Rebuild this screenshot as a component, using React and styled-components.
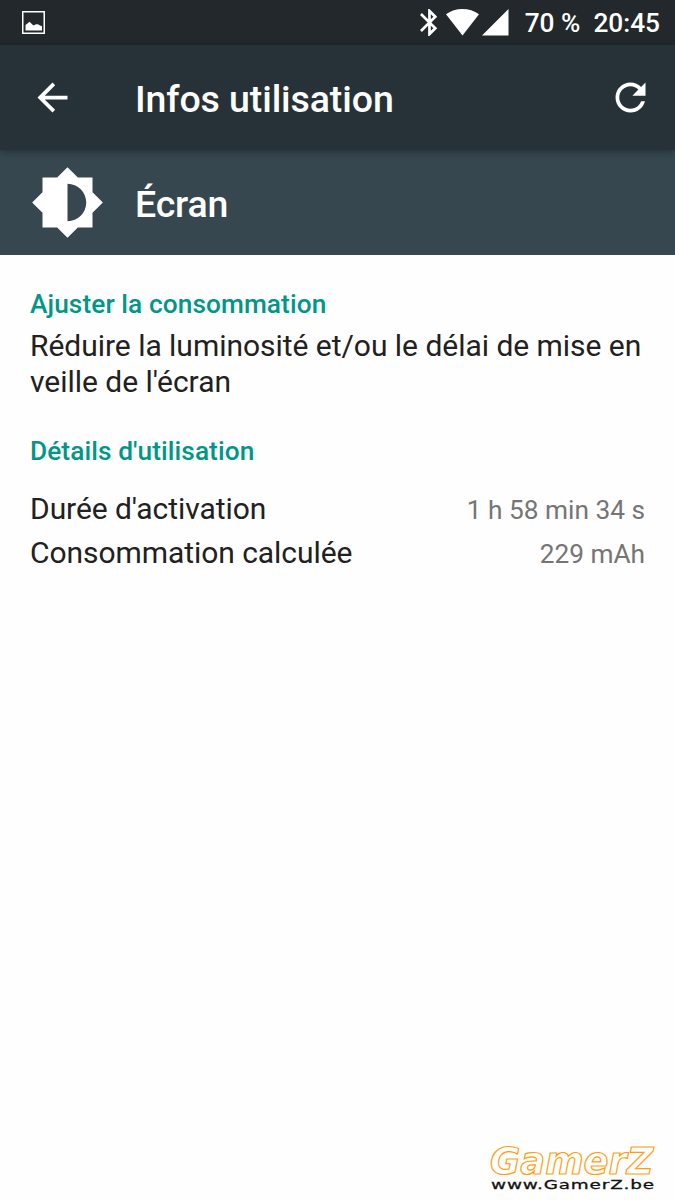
import React from "react";
import styled, { createGlobalStyle } from "styled-components";

const GlobalStyle = createGlobalStyle`
  *, *::before, *::after { box-sizing: border-box; }
  body { margin: 0; background: #fefefe; font-family: Roboto, sans-serif; }
`;

const Screen = styled.div`
  display: flex;
  flex-direction: column;
  width: 675px;
  height: 1200px;
  overflow: hidden;
  background: #fefefe;
`;

const StatusBar = styled.div`
  display: flex;
  align-items: center;
  height: 45px;
  padding: 0 15px 0 22px;
  background: #22282b;
  color: #fff;
  flex: none;
`;

const StatusIcons = styled.div`
  display: flex;
  align-items: center;
  margin-left: auto;
  padding-right: 15.8px;
`;

const Glyph = styled.svg`
  display: block;
  flex: none;
  width: ${(p) => p.$w}px;
  height: ${(p) => p.$h}px;
  margin-left: ${(p) => p.$gap || 0}px;
  fill: #fff;
`;

const StatusText = styled.span`
  font-size: 26.25px;
  line-height: 31px;
  font-weight: 500;
  white-space: pre;
  padding-top: 2px;
  margin-left: ${(p) => p.$gap || 0}px;
`;

const AppBar = styled.header`
  display: flex;
  align-items: center;
  height: 105px;
  padding: 0 22.5px 0 30px;
  background: #273238;
  color: #fff;
  box-shadow: 0 2px 7px rgba(0, 0, 0, 0.35);
  z-index: 1;
  flex: none;
`;

const Title = styled.h1`
  margin: 0 auto 0 60px;
  font-size: 37.5px;
  line-height: 44px;
  font-weight: 500;
  letter-spacing: -0.1px;
  padding-top: 3px;
`;

const Hero = styled.section`
  display: flex;
  align-items: center;
  height: 105px;
  padding-left: 30px;
  background: #37474f;
  color: #fff;
  flex: none;
`;

const HeroName = styled.h2`
  margin: 0 0 0 30px;
  padding-top: 3px;
  font-size: 37.5px;
  line-height: 44px;
  font-weight: 500;
  letter-spacing: -0.15px;
`;

const Content = styled.main`
  padding: 34px 30px 0;
`;

const SectionTitle = styled.h3`
  margin: 0;
  font-size: 26.25px;
  line-height: 31px;
  font-weight: 500;
  letter-spacing: 0.08px;
  color: #009688;
`;

const Tip = styled.p`
  margin: 8px 0 37px;
  font-size: 30px;
  line-height: 35.5px;
  letter-spacing: -0.03px;
  color: #212121;
`;

const Details = styled.dl`
  display: grid;
  gap: 9px;
  margin: 24px 0 0;
`;

const Detail = styled.div`
  display: flex;
  justify-content: space-between;
  align-items: baseline;
  height: 35px;
`;

const Label = styled.dt`
  font-size: 30px;
  line-height: 35px;
  letter-spacing: -0.06px;
  color: #212121;
`;

const Value = styled.dd`
  margin: 0;
  font-size: 26.25px;
  line-height: 31px;
  color: #757575;
`;

const Watermark = styled.svg`
  display: block;
  width: 185px;
  height: 60px;
  margin: auto 5px 0 auto;
  flex: none;
`;

const Brand = styled.text`
  font: italic bold 37px "DejaVu Sans", sans-serif;
  fill: #fff;
  stroke: #ff9f10;
  stroke-width: 1.2px;
`;

const Site = styled.text`
  font: 13px "DejaVu Sans", sans-serif;
  letter-spacing: 0.6px;
  fill: #111;
  stroke: #111;
  stroke-width: 0.3px;
`;

export default function App() {
  return (
    <Screen>
      <GlobalStyle />
      <StatusBar>
        <Glyph $w={23} $h={23} viewBox="0 0 23 23">
          <path fillRule="evenodd" d="M0 0H23V23H0ZM1.5 1.5V21.5H21.5V1.5Z" />
          <path d="M3.5 19.5V14C4.8 13.3 6 12 7.4 10.8C9 12 10.3 13.8 11.7 14.4C13.4 13.5 15.5 12.6 17 13.8C18.2 14.9 19.6 14.8 20 15.5V19.5Z" />
        </Glyph>
        <StatusIcons>
          <Glyph $w={17.2} $h={27} viewBox="5 2 12.71 20">
            <path d="M17.71 7.71 12 2h-1v7.59L6.41 5 5 6.41 10.59 12 5 17.59 6.41 19 11 14.41V22h1l5.71-5.71-4.3-4.29 4.3-4.29zM13 5.83l1.88 1.88L13 9.59V5.83zm1.88 10.46L13 18.17v-3.76l1.88 1.88z" />
          </Glyph>
          <Glyph $w={33} $h={26.5} $gap={9} viewBox="0 0 33 26.5">
            <path d="M16.5 26.5 0 5.3C4.8 1.7 10.5 0 16.5 0S28.2 1.7 33 5.3Z" />
          </Glyph>
          <Glyph $w={26.5} $h={26.5} $gap={3.5} viewBox="0 0 26 26">
            <path d="M0 26H26V0Z" />
          </Glyph>
        </StatusIcons>
        <StatusText>70 %</StatusText>
        <StatusText $gap={13}>20:45</StatusText>
      </StatusBar>
      <AppBar>
        <Glyph $w={45} $h={45} viewBox="0 0 24 24">
          <path d="M20 11H7.83l5.59-5.59L12 4l-8 8 8 8 1.41-1.41L7.83 13H20v-2z" />
        </Glyph>
        <Title>Infos utilisation</Title>
        <Glyph $w={45} $h={45} viewBox="0 0 24 24">
          <path d="M17.65 6.35C16.2 4.9 14.21 4 12 4c-4.42 0-7.99 3.58-7.99 8s3.57 8 7.99 8c3.73 0 6.84-2.55 7.73-6h-2.08c-.82 2.33-3.04 4-5.65 4-3.31 0-6-2.69-6-6s2.69-6 6-6c1.66 0 3.14.69 4.22 1.78L13 11h7V4l-2.35 2.35z" />
        </Glyph>
      </AppBar>
      <Hero>
        <Glyph $w={75} $h={75} viewBox="0 0 24 24">
          <path d="M20 15.31 23.31 12 20 8.69V4h-4.69L12 .69 8.69 4H4v4.69L.69 12 4 15.31V20h4.69L12 23.31 15.31 20H20v-4.69zM12 18V6c3.31 0 6 2.69 6 6s-2.69 6-6 6z" />
        </Glyph>
        <HeroName>Écran</HeroName>
      </Hero>
      <Content>
        <SectionTitle>Ajuster la consommation</SectionTitle>
        <Tip>Réduire la luminosité et/ou le délai de mise en veille de l'écran</Tip>
        <SectionTitle>Détails d'utilisation</SectionTitle>
        <Details>
          <Detail>
            <Label>Durée d'activation</Label>
            <Value>1 h 58 min 34 s</Value>
          </Detail>
          <Detail>
            <Label>Consommation calculée</Label>
            <Value>229 mAh</Value>
          </Detail>
        </Details>
      </Content>
      <Watermark viewBox="0 0 185 60">
        <Brand x="5" y="34" textLength="163.5" lengthAdjust="spacingAndGlyphs">GamerZ</Brand>
        <Site x="6" y="49.3" textLength="164" lengthAdjust="spacingAndGlyphs">www.GamerZ.be</Site>
      </Watermark>
    </Screen>
  );
}
